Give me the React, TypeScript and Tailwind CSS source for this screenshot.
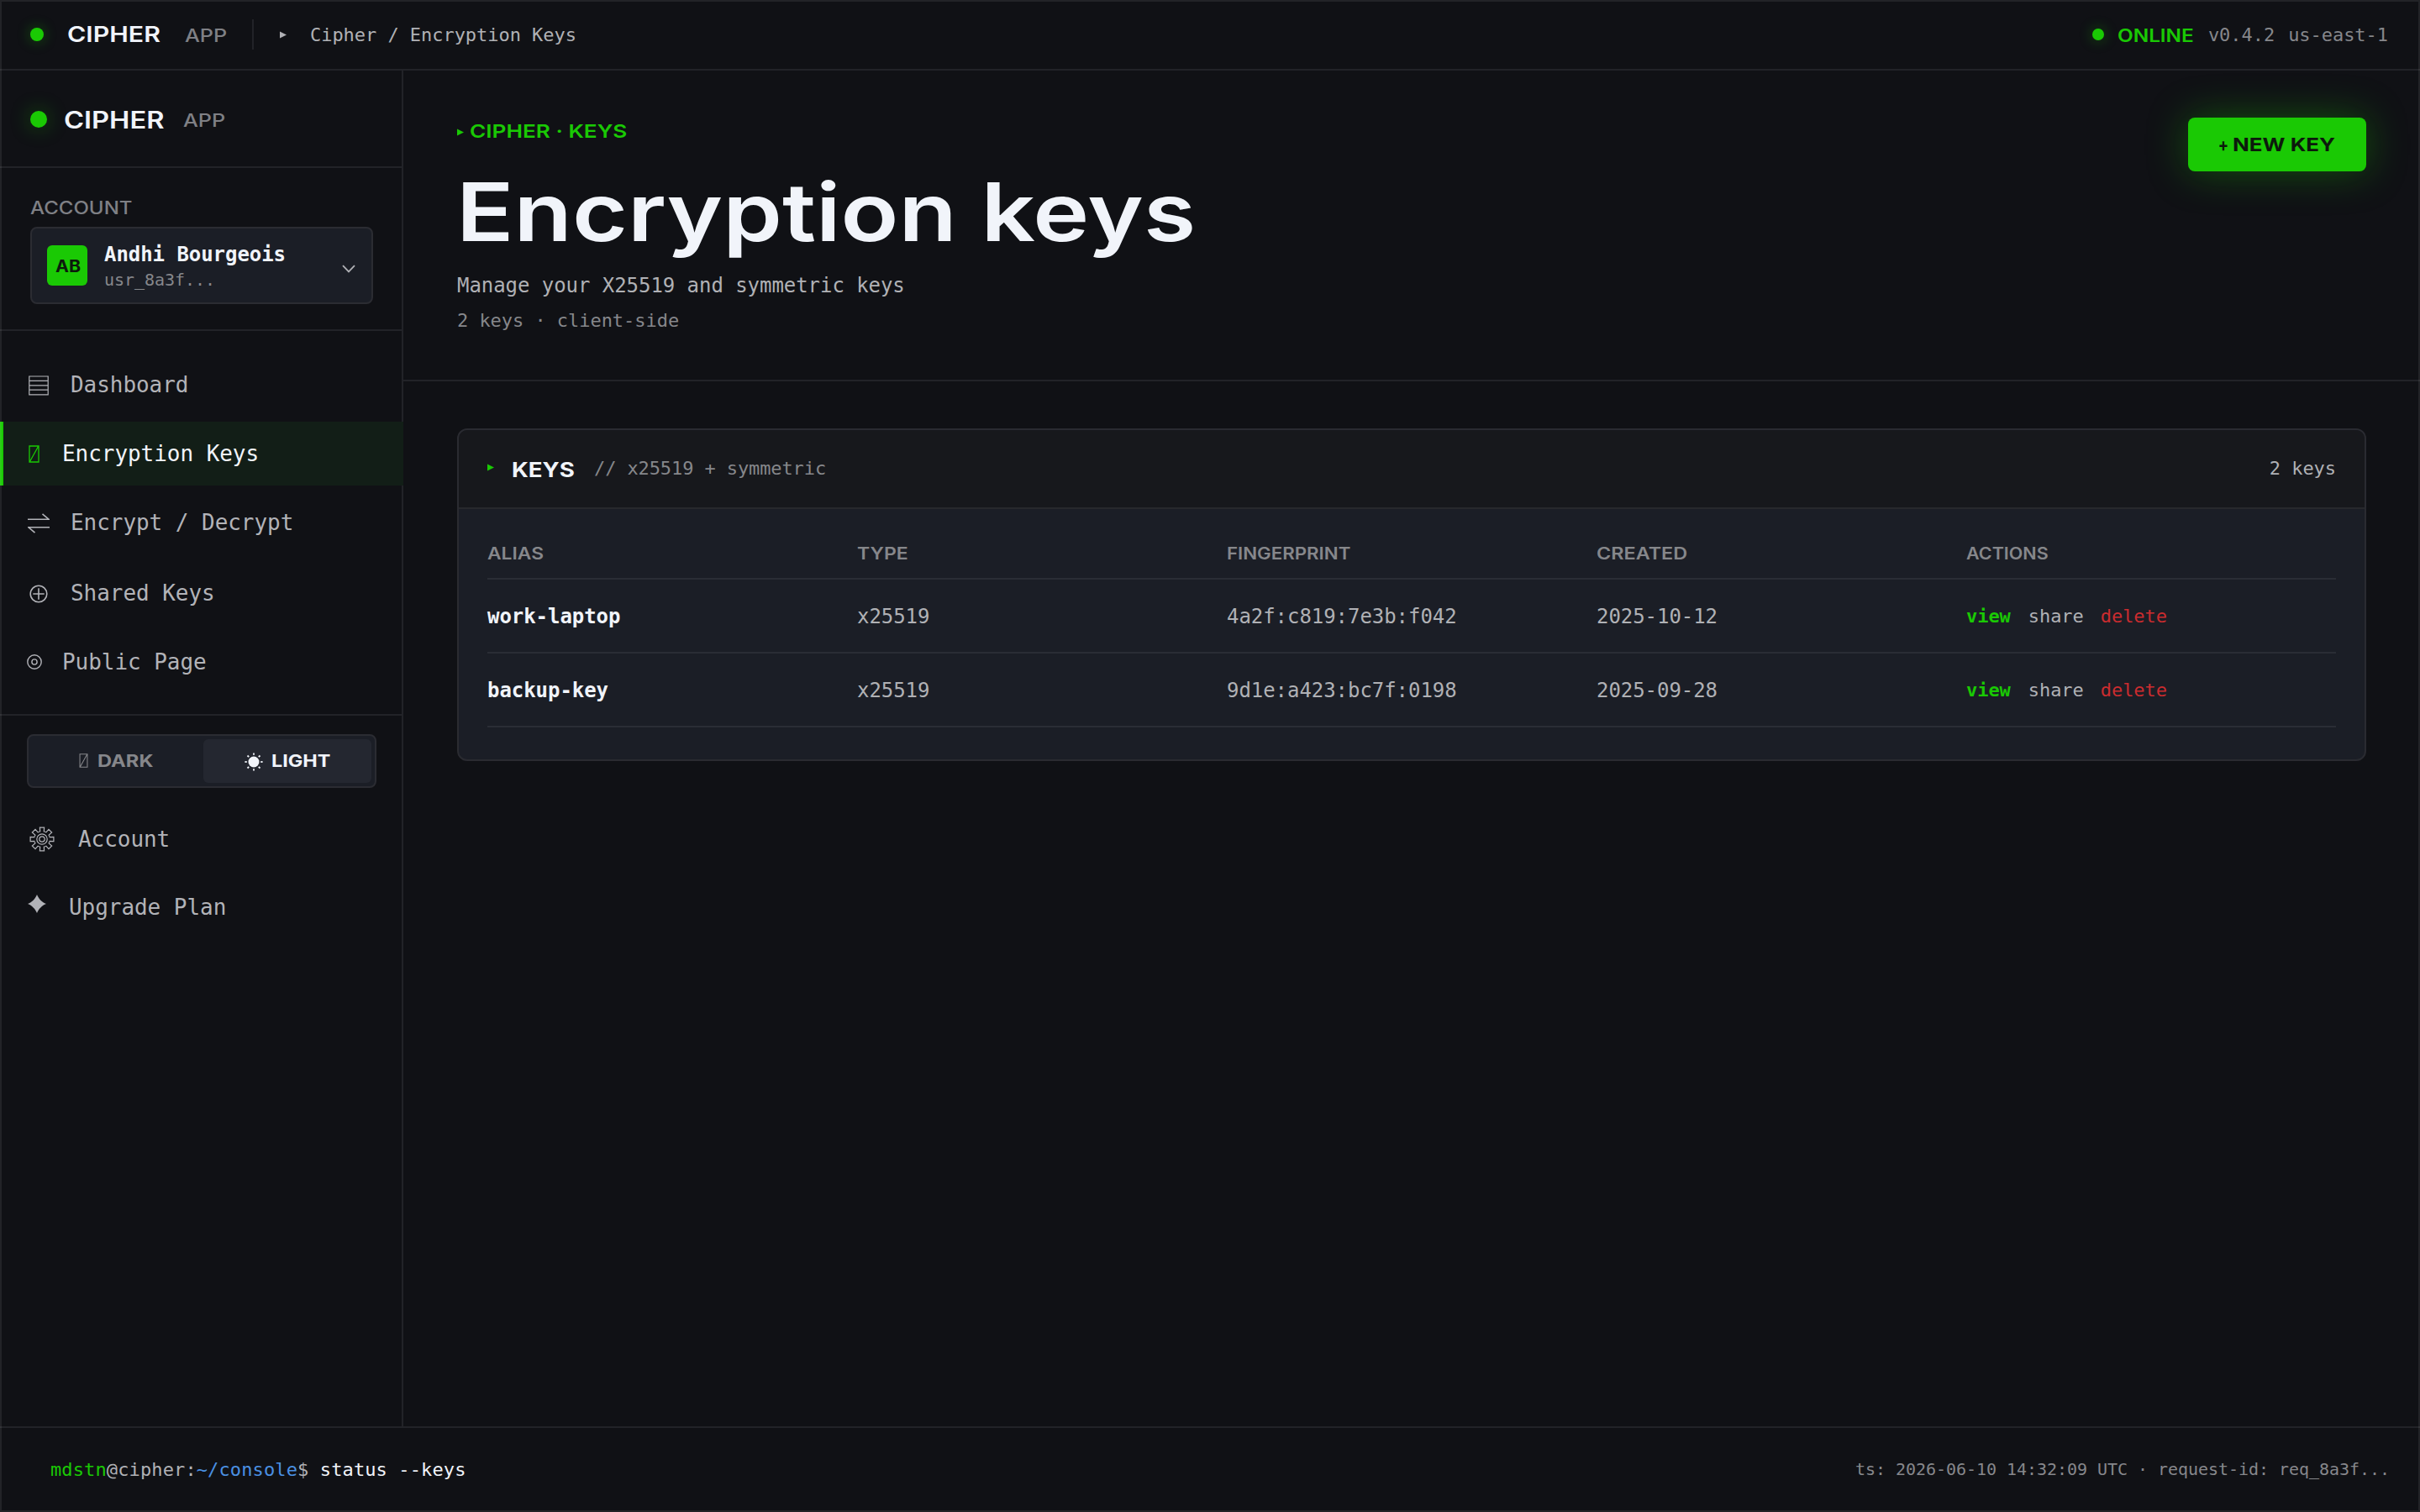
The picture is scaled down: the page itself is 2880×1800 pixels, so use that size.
import type {ReactNode} from "react";
import clsx from "clsx";

type KeyRow = { alias: string; type: string; fingerprint: string; created: string };

const KEYS: KeyRow[] = [
  {alias: "work-laptop", type: "x25519", fingerprint: "4a2f:c819:7e3b:f042", created: "2025-10-12"},
  {alias: "backup-key", type: "x25519", fingerprint: "9d1e:a423:bc7f:0198", created: "2025-09-28"},
];

const COLUMNS = [
  {label: "ALIAS", scale: "scale-x-[1.14]"},
  {label: "TYPE", scale: "scale-x-[1.15]"},
  {label: "FINGERPRINT", scale: "scale-x-[1.112]"},
  {label: "CREATED", scale: "scale-x-[1.17]"},
  {label: "ACTIONS", scale: "scale-x-[1.075]"},
];

// wide display lettering, stretched from the left edge
function Wide({children, className}: { children: ReactNode; className?: string }) {
  return (
      <span className={clsx("inline-block origin-left whitespace-nowrap font-['Inter',sans-serif]", className)}>
        {children}
      </span>
  );
}

function Triangle({className}: { className?: string }) {
  return (
      <svg viewBox="0 0 8 9" className={clsx("h-[9px] w-[8px] shrink-0", className)} fill="currentColor">
        <path d="M0 0.5 8 4.5 0 8.5Z"/>
      </svg>
  );
}

function MissingGlyph({className}: { className?: string }) {
  return (
      <svg viewBox="0 0 13 21" className={className} fill="none" stroke="currentColor" strokeWidth="1.3">
        <path d="M1 1H12V20H1ZM1.5 19.5 11.5 1.5"/>
      </svg>
  );
}

function DashboardIcon() {
  return (
      <svg viewBox="0 0 24 24" className="h-6 w-6" fill="none" stroke="currentColor" strokeWidth="1.2">
        <path d="M0.8 1H23.2V22.8H0.8ZM0.8 6.3H23.2M0.8 11.8H23.2M0.8 17.2H23.2"/>
      </svg>
  );
}

function SwapIcon() {
  return (
      <svg viewBox="0 0 26 24" className="h-6 w-[26px]" fill="none" stroke="currentColor" strokeWidth="1.6">
        <path d="M0 7.2H25L17.5 0.8M26 16.8H1L8.5 23.2"/>
      </svg>
  );
}

function PlusCircleIcon() {
  return (
      <svg viewBox="0 0 22 22" className="h-[22px] w-[22px]" fill="none" stroke="currentColor" strokeWidth="1.6">
        <circle cx="11" cy="11" r="9.8"/>
        <path d="M11 4.3V17.7M4.3 11H17.7"/>
      </svg>
  );
}

function TargetIcon() {
  return (
      <svg viewBox="0 0 18 18" className="h-[18px] w-[18px]" fill="none" stroke="currentColor" strokeWidth="1.4">
        <circle cx="9" cy="9" r="8.2"/>
        <circle cx="9" cy="9" r="3.1"/>
      </svg>
  );
}

function GearIcon() {
  const teeth = [0, 45, 90, 135, 180, 225, 270, 315];
  return (
      <svg viewBox="-15 -15 30 30" className="h-[30px] w-[30px]" fill="none" stroke="currentColor" strokeWidth="1.2">
        {teeth.map((angle) => (
            <path key={angle} transform={`rotate(${angle})`} d="M-3.6 -8.7 -2.3 -9.2 -2.6 -13.9H2.6L2.3 -9.2 3.6 -8.7"/>
        ))}
        <circle r="6.2"/>
        <circle r="3.2"/>
      </svg>
  );
}

function StarIcon() {
  return (
      <svg viewBox="0 0 22 22" className="h-[22px] w-[22px]" fill="currentColor">
        <path d="M11 0C13 5 17 9 22 11 17 13 13 17 11 22 9 17 5 13 0 11 5 9 9 5 11 0Z"/>
      </svg>
  );
}

function SunIcon() {
  return (
      <svg viewBox="-11 -11 22 22" className="mt-[2px] h-[22px] w-[22px] shrink-0">
        <circle r="6.5" fill="currentColor"/>
        {[0, 45, 90, 135, 180, 225, 270, 315].map((angle) => (
            <path key={angle} transform={`rotate(${angle})`} d="M0 -8.2V-10.6" stroke="currentColor" strokeWidth="1.8"/>
        ))}
      </svg>
  );
}

function NavItem({
  icon,
  label,
  iconClass,
  className = "h-[80px]",
  active = false,
}: {
  icon: ReactNode;
  label: string;
  iconClass: string;
  className?: string;
  active?: boolean;
}) {
  return (
      <a
          className={clsx(
              "flex items-center text-[26px] leading-none tracking-[-0.05px]",
              active ? "border-l-4 border-[#1ac904] bg-[#121e17] text-[#f1f4fa]" : "border-l-4 border-transparent text-[#b2b3b8]",
              className
          )}
      >
        <span className={clsx("flex shrink-0 items-center", active && "text-[#1ac904]", iconClass)}>{icon}</span>
        {label}
      </a>
  );
}

function TopBar() {
  return (
      <header className="flex h-[84px] shrink-0 items-center justify-between border-b-2 border-[#222328] pr-[38px] pl-[36px]">
        <div className="flex items-center">
          <span className="h-4 w-4 rounded-full bg-[#1ac904] shadow-[0_0_16px_rgba(26,201,4,0.4)]"/>
          <Wide className="ml-[28px] w-[140px] scale-x-[1.165] text-[26px] leading-none font-semibold text-[#f1f4fa]">CIPHER</Wide>
          <Wide className="mt-[3px] w-[80px] scale-x-[1.2] text-[21px] leading-none font-medium text-[#7f8085]">APP</Wide>
          <span className="h-9 w-[2px] bg-[#222328]"/>
          <Triangle className="ml-[31px] text-[#b0b1b5]"/>
          <span className="ml-[28px] text-[22px] tracking-[-0.04px] text-[#b0b1b5]">Cipher / Encryption Keys</span>
        </div>
        <div className="flex items-center text-[22px] tracking-[-0.04px] text-[#86878b]">
          <span className="h-[14px] w-[14px] rounded-full bg-[#1ac904] shadow-[0_0_16px_rgba(26,201,4,0.4)]"/>
          <Wide className="mt-[3px] ml-[16px] w-[108px] scale-x-[1.16] text-[21px] leading-none font-semibold text-[#1ac904]">ONLINE</Wide>
          <span>v0.4.2</span>
          <span className="ml-4">us-east-1</span>
        </div>
      </header>
  );
}

function Sidebar() {
  return (
      <aside className="flex w-[480px] shrink-0 flex-col border-r-2 border-[#222328]">
        <div className="-mr-[2px] flex h-[116px] items-center border-b-2 border-[#222328] pl-[36px]">
          <span className="mt-[2px] h-5 w-5 rounded-full bg-[#1ac904] shadow-[0_0_24px_rgba(26,201,4,0.4)]"/>
          <Wide className="mt-[3px] ml-[20px] w-[142px] scale-x-[1.165] text-[28px] leading-none font-semibold text-[#f1f4fa]">CIPHER</Wide>
          <Wide className="mt-[5px] scale-x-[1.2] text-[21px] leading-none font-medium text-[#7f8085]">APP</Wide>
        </div>

        <div className="-mr-[2px] h-[194px] border-b-2 border-[#222328] px-[36px] pt-[36px]">
          <div className="flex h-[22px] items-center">
            <Wide className="scale-x-[1.145] text-[21px] leading-none font-medium text-[#7f8085]">ACCOUNT</Wide>
          </div>
          <div className="mt-[12px] flex h-[92px] items-center rounded-lg border-2 border-[#2b2c32] bg-[#1b1e26] pr-[19px] pl-[18px]">
            <span className="flex h-12 w-12 items-center justify-center rounded-md bg-[#1ac904] text-[#0c1a0c]">
              <Wide className="mt-[2px] origin-center scale-x-[1.07] text-[20px] leading-none font-bold">AB</Wide>
            </span>
            <div className="ml-5 flex flex-1 flex-col pt-[3px]">
              <span className="text-[24px] leading-[30px] font-bold tracking-[-0.05px] text-[#f1f4fa]">Andhi Bourgeois</span>
              <span className="text-[20px] leading-[30px] tracking-[-0.04px] text-[#86878b]">usr_8a3f...</span>
            </div>
            <svg viewBox="0 0 16 10" className="mt-2 h-[10px] w-[16px]" fill="none" stroke="#b0b1b5" strokeWidth="1.8">
              <path d="M1 1.2 8 8.4 15 1.2"/>
            </svg>
          </div>
        </div>

        <nav className="-mr-[2px] flex h-[458px] flex-col gap-1 border-b-2 border-[#222328] pt-6">
          <NavItem icon={<DashboardIcon/>} label="Dashboard" iconClass="ml-[30px] w-[50px] pt-[2px]"/>
          <NavItem icon={<MissingGlyph className="h-[21px] w-[13px]"/>} label="Encryption Keys" iconClass="ml-[30px] w-[40px]" className="h-[76px]" active/>
          <NavItem icon={<SwapIcon/>} label="Encrypt / Decrypt" iconClass="ml-[29px] w-[51px] pt-[2px]"/>
          <NavItem icon={<PlusCircleIcon/>} label="Shared Keys" iconClass="ml-[31px] w-[49px] pt-[2px]"/>
          <NavItem icon={<TargetIcon/>} label="Public Page" iconClass="ml-[28px] w-[42px]" className="h-[76px]"/>
        </nav>

        <div className="pt-[22px]">
          <div className="ml-[32px] grid h-16 w-[416px] grid-cols-2 gap-1 rounded-lg border-2 border-[#2b2c32] bg-[#1b1e26] p-1 text-[20px] leading-none">
            <button className="flex min-w-0 items-center pl-[56px] text-[#86878b]">
              <MissingGlyph className="mb-[1px] h-[17px] w-[11px]"/>
              <Wide className="ml-[11px] scale-x-[1.185] font-bold">DARK</Wide>
            </button>
            <button className="flex min-w-0 items-center rounded-md bg-[#242730] pl-[49px] text-[#f1f4fa]">
              <SunIcon/>
              <Wide className="ml-[10px] scale-x-[1.17] font-bold">LIGHT</Wide>
            </button>
          </div>
          <div className="mt-[21px] flex flex-col">
            <NavItem icon={<GearIcon/>} label="Account" iconClass="ml-[31px] w-[58px]"/>
            <NavItem icon={<StarIcon/>} label="Upgrade Plan" iconClass="ml-[29px] w-[49px] pb-[8px]" className="h-[82px]"/>
          </div>
        </div>
      </aside>
  );
}

function KeysTable() {
  return (
      <section className="overflow-hidden rounded-xl border-2 border-[#2a2b31] bg-[#1b1e26]">
        <div className="flex h-[94px] items-center justify-between border-b-2 border-[#27282c] bg-[#17181c] px-[34px] text-[22px] tracking-[-0.04px]">
          <div className="flex items-center">
            <Triangle className="mb-[3px] text-[#1ac904]"/>
            <Wide className="mt-[3px] ml-[21px] w-[98px] scale-x-[1.15] text-[24px] leading-none font-bold tracking-normal text-[#f1f4fa]">KEYS</Wide>
            <span className="mb-[1px] tracking-[-0.1px] text-[#86878b]">// x25519 + symmetric</span>
          </div>
          <span className="mb-[1px] text-[#b0b1b5]">2 keys</span>
        </div>
        <div className="px-[34px] pt-[36px] pb-[38px]">
          <div className="grid h-[48px] grid-cols-5 border-b-2 border-[#2a2d35] text-[20px] leading-[34px] text-[#86878b]">
            {COLUMNS.map((c) => (
                <div key={c.label} className="flex"><Wide className={clsx("font-semibold", c.scale)}>{c.label}</Wide></div>
            ))}
          </div>
          {KEYS.map((k) => (
              <div
                  key={k.alias}
                  className="grid h-[88px] grid-cols-5 items-center border-b-2 border-[#2a2d35] pt-[2px] text-[24px] leading-8 tracking-[-0.05px] text-[#b0b1b5]"
              >
                <span className="font-bold text-[#f1f4fa]">{k.alias}</span>
                <span>{k.type}</span>
                <span>{k.fingerprint}</span>
                <span>{k.created}</span>
                <span className="flex gap-5 text-[22px]">
                  <a className="font-bold text-[#1ac904]">view</a>
                  <a className="ml-[1px]">share</a>
                  <a className="text-[#cb2c2f]">delete</a>
                </span>
              </div>
          ))}
        </div>
      </section>
  );
}

function Footer() {
  return (
      <footer className="flex h-[102px] shrink-0 items-center justify-between border-t-2 border-[#222328] pr-[36px] pb-[2px] pl-[60px]">
        <p className="text-[22px] tracking-[0.12px] text-[#b0b1b5]">
          <span className="text-[#1ac904]">mdstn</span>@cipher:<span className="text-[#4a90e2]">~/console</span>${" "}
          <span className="text-[#f1f4fa]">status --keys</span>
        </p>
        <p className="text-[20px] tracking-[-0.04px] text-[#86878b]">ts: 2026-06-10 14:32:09 UTC · request-id: req_8a3f...</p>
      </footer>
  );
}

export default function App() {
  return (
      <div className="relative flex h-[1800px] w-[2880px] flex-col overflow-hidden bg-[#101115] font-['DejaVu_Sans_Mono',monospace]">
        <TopBar/>
        <div className="flex min-h-0 flex-1">
          <Sidebar/>
          <main className="flex min-w-0 flex-1 flex-col">
            <div className="flex h-[370px] items-start justify-between border-b-2 border-[#222328] px-16 pt-14">
              <div>
                <div className="flex h-8 items-center text-[#1ac904]">
                  <Triangle className="mt-[2px]"/>
                  <Wide className="ml-[7px] scale-x-[1.19] text-[22px] leading-none font-semibold">CIPHER · KEYS</Wide>
                </div>
                <h1 className="mt-8 flex text-[96px] leading-[96px] text-[#f1f4fa]">
                  <Wide className="ml-[-1px] scale-x-[1.18] font-semibold">Encryption keys</Wide>
                </h1>
                <p className="mt-6 text-[24px] leading-8 tracking-[-0.05px] text-[#b0b1b5]">Manage your X25519 and symmetric keys</p>
                <p className="mt-3 text-[22px] leading-7 tracking-[-0.04px] text-[#86878b]">2 keys · client-side</p>
              </div>
              <button className="flex h-16 w-[212px] items-center rounded-lg bg-[#1ac904] pl-[34px] text-[22px] leading-none text-[#0c1a0c] shadow-[0_0_48px_rgba(26,201,4,0.35)]">
                <Wide className="w-[19px] scale-x-[0.83] font-bold">+</Wide>
                <Wide className="scale-x-[1.18] font-bold">NEW KEY</Wide>
              </button>
            </div>
            <div className="px-16 pt-14">
              <KeysTable/>
            </div>
          </main>
        </div>
        <Footer/>
        <div className="pointer-events-none absolute inset-0 border-2 border-white/8"/>
      </div>
  );
}
